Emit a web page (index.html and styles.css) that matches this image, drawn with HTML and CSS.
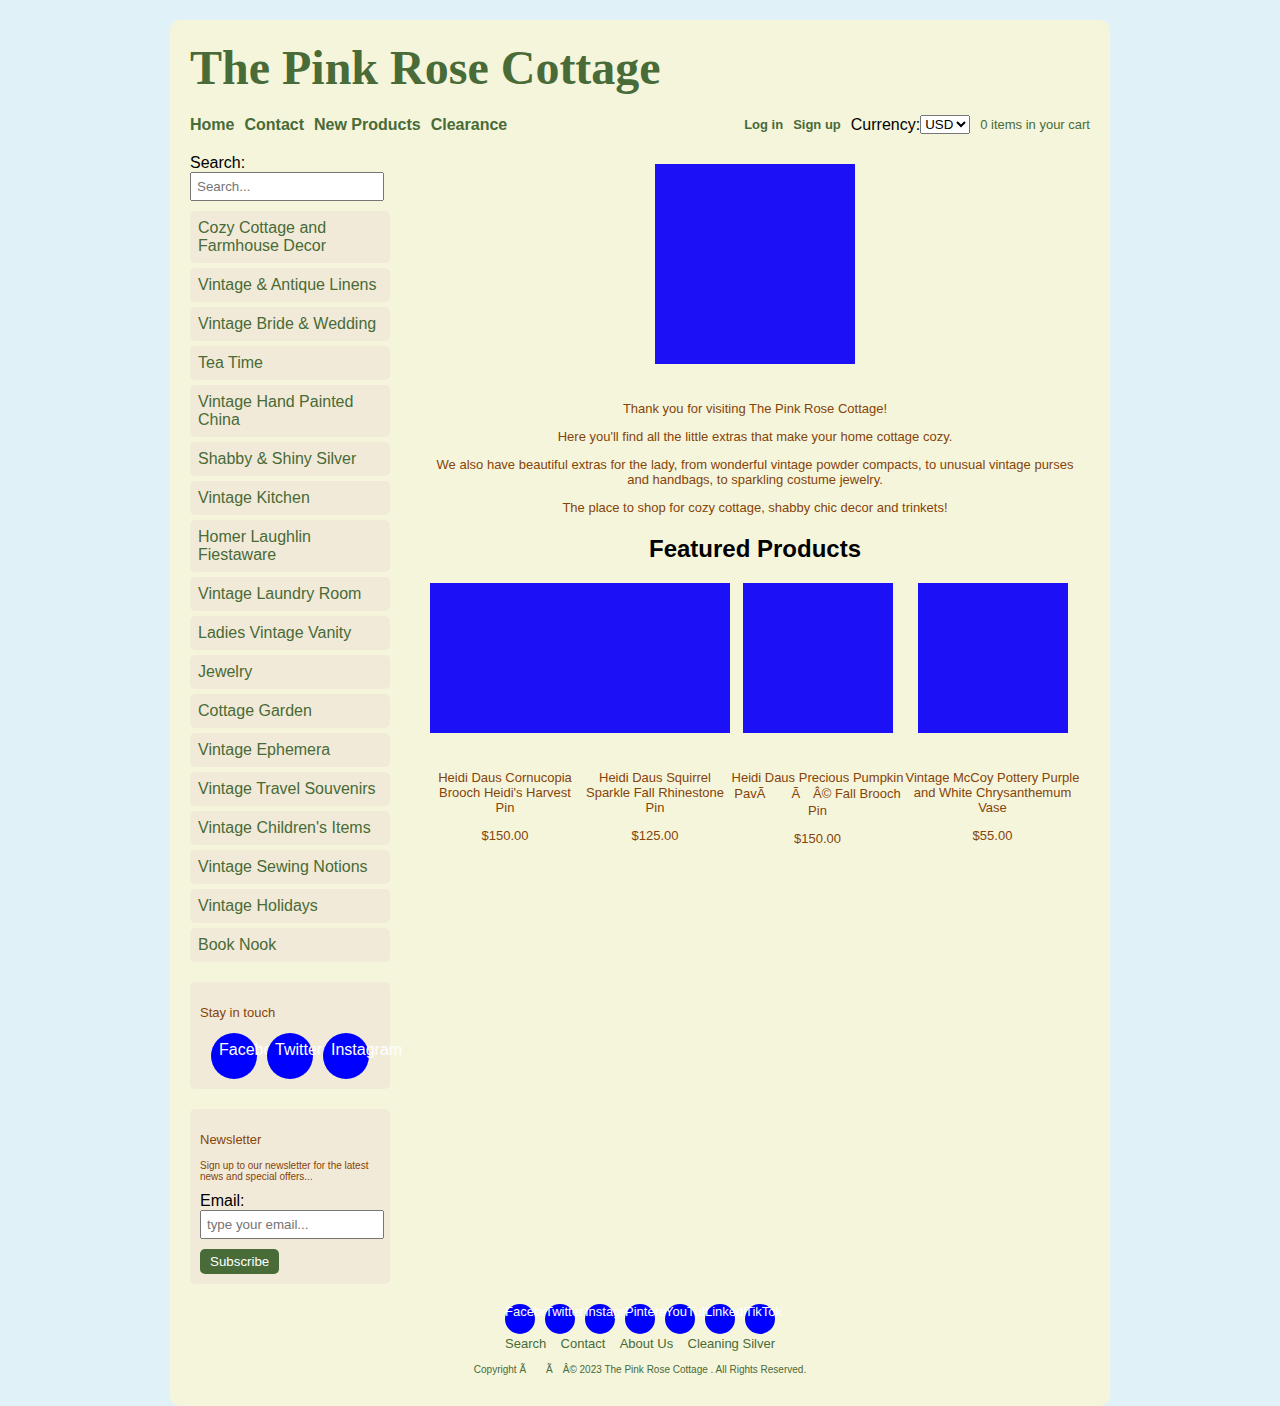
FILE: index.html
```html
<!DOCTYPE html>
<html lang="en">
<head>
<meta charset="utf-8">
<meta name="viewport" content="width=device-width, initial-scale=1">
<title>The Pink Rose Cottage</title>
<link rel="stylesheet" href="styles.css">
</head>
<body>
<div class="container">
  <header>
    <h1 class="title">The Pink Rose Cottage</h1>
    <div class="topbar">
      <nav class="nav">
        <a href="#">Home</a>
        <a href="#">Contact</a>
        <a href="#">New Products</a>
        <a href="#">Clearance</a>
      </nav>
      <div class="account">
        <a class="account-link" href="#">Log in</a>
        <a class="account-link" href="#">Sign up</a>
        <div class="currency">
          <label for="currency">Currency:</label>
          <select id="currency"><option>USD</option><option>CAD</option><option>EUR</option></select>
        </div>
        <a class="cart" href="#">0 items in your cart</a>
      </div>
    </div>
  </header>

  <div class="content">
    <aside class="sidebar">
      <form class="search">
        <label for="search">Search:</label>
        <input class="field search-field" type="text" id="search" placeholder="Search...">
      </form>
      <ul class="categories">
        <li><a href="#">Cozy Cottage and Farmhouse Decor</a></li>
        <li><a href="#">Vintage &amp; Antique Linens</a></li>
        <li><a href="#">Vintage Bride &amp; Wedding</a></li>
        <li><a href="#">Tea Time</a></li>
        <li><a href="#">Vintage Hand Painted China</a></li>
        <li><a href="#">Shabby &amp; Shiny Silver</a></li>
        <li><a href="#">Vintage Kitchen</a></li>
        <li><a href="#">Homer Laughlin Fiestaware</a></li>
        <li><a href="#">Vintage Laundry Room</a></li>
        <li><a href="#">Ladies Vintage Vanity</a></li>
        <li><a href="#">Jewelry</a></li>
        <li><a href="#">Cottage Garden</a></li>
        <li><a href="#">Vintage Ephemera</a></li>
        <li><a href="#">Vintage Travel Souvenirs</a></li>
        <li><a href="#">Vintage Children's Items</a></li>
        <li><a href="#">Vintage Sewing Notions</a></li>
        <li><a href="#">Vintage Holidays</a></li>
        <li><a href="#">Book Nook</a></li>
      </ul>
      <section class="box">
        <p>Stay in touch</p>
        <div class="social">
          <a href="#">Facebook</a>
          <a href="#">Twitter</a>
          <a href="#">Instagram</a>
        </div>
      </section>
      <section class="box">
        <p>Newsletter</p>
        <p class="small">Sign up to our newsletter for the latest news and special offers...</p>
        <form class="newsletter">
          <label for="email">Email:</label>
          <input class="field email-field" type="email" id="email" placeholder="type your email...">
          <button class="subscribe" type="button">Subscribe</button>
        </form>
      </section>
    </aside>

    <main class="main">
      <div class="hero"></div>
      <p>Thank you for visiting The Pink Rose Cottage!</p>
      <p>Here you'll find all the little extras that make your home cottage cozy.</p>
      <p>We also have beautiful extras for the lady, from wonderful vintage powder compacts, to unusual vintage purses and handbags, to sparkling costume jewelry.</p>
      <p>The place to shop for cozy cottage, shabby chic decor and trinkets!</p>
      <h2>Featured Products</h2>
      <div class="products">
        <article>
          <div class="photo"></div>
          <p>Heidi Daus Cornucopia Brooch Heidi's Harvest Pin</p>
          <p>$150.00</p>
        </article>
        <article>
          <div class="photo"></div>
          <p>Heidi Daus Squirrel Sparkle Fall Rhinestone Pin</p>
          <p>$125.00</p>
        </article>
        <article>
          <div class="photo"></div>
          <p>Heidi Daus Precious Pumpkin <span class="tall">PavÃ&emsp;&emsp;Ã&emsp;Â© Fall Brooch</span> Pin</p>
          <p>$150.00</p>
        </article>
        <article>
          <div class="photo"></div>
          <p>Vintage McCoy Pottery Purple and White Chrysanthemum Vase</p>
          <p>$55.00</p>
        </article>
      </div>
    </main>
  </div>

  <footer class="footer">
    <div class="footer-links">
      <div class="footer-social">
        <a href="#">Facebook</a>
        <a href="#">Twitter</a>
        <a href="#">Instagram</a>
        <a href="#">Pinterest</a>
        <a href="#">YouTube</a>
        <a href="#">LinkedIn</a>
        <a href="#">TikTok</a>
      </div>
      <nav class="footer-nav">
        <a href="#">Search</a>
        <a href="#">Contact</a>
        <a href="#">About Us</a>
        <a href="#">Cleaning Silver</a>
      </nav>
    </div>
    <p class="copyright">Copyright Ã&emsp;&emsp;Ã&emsp;Â© 2023 The Pink Rose Cottage . All Rights Reserved.</p>
  </footer>
</div>
</body>
</html>
```
FILE: styles.css
```css
:root {
  --sky: #e0f1f8;
  --cream: #f5f5dc;
  --linen: #f2ead8;
  --green: #486b37;
  --brown: #854408;
}

body {
  margin: 0;
  padding: 20px 20px 0;
  background: var(--sky);
  color: #000;
  font: 16px/18px "Liberation Sans", Arial, sans-serif;
}

a {
  color: var(--green);
  text-decoration: none;
}

p {
  margin: 13px 0;
  color: var(--brown);
  font-size: 13px;
  line-height: 15px;
}

.container {
  box-sizing: border-box;
  max-width: 940px;
  margin: 0 auto;
  padding: 20px;
  border-radius: 10px;
  background: var(--cream);
}

.title {
  margin: 0 0 20px;
  color: var(--green);
  font: bold 48px/55px "Liberation Serif", "Times New Roman", serif;
}

.topbar,
.nav,
.account,
.currency {
  display: flex;
  align-items: center;
}

.topbar {
  justify-content: space-between;
  margin-bottom: 20px;
}

.nav,
.account {
  gap: 10px;
}

.nav a {
  font-weight: bold;
}

.account-link,
.cart {
  font-size: 13px;
}

.account-link {
  font-weight: bold;
}

.currency select {
  width: 50px;
}

.content {
  display: flex;
  gap: 30px;
}

.sidebar {
  flex: 0 0 200px;
}

.search label,
.newsletter label {
  display: block;
}

.field {
  display: block;
  box-sizing: border-box;
  height: 29px;
  margin-bottom: 10px;
  padding: 5px;
}

.search-field {
  width: calc(100% - 6px);
}

.email-field {
  width: calc(100% + 4px);
}

.categories {
  display: grid;
  gap: 5px;
  margin: 0;
  padding: 0;
  list-style: none;
}

.categories a {
  display: block;
  padding: 8px;
  border-radius: 5px;
  background: var(--linen);
}

.box {
  display: flow-root;
  margin-top: 20px;
  padding: 10px;
  border-radius: 5px;
  background: var(--linen);
}

.small {
  margin: 0 0 10px;
  font-size: 10px;
  line-height: 11px;
}

.social,
.footer-social {
  display: flex;
  justify-content: center;
  gap: 10px;
}

.social a,
.footer-social a {
  width: 30px;
  height: 30px;
  border-radius: 50%;
  background: #00f;
  color: #fff;
}

.social a {
  padding: 8px;
}

.subscribe {
  display: block;
  padding: 5px 10px;
  border: 0;
  border-radius: 5px;
  background: var(--green);
  color: #fff;
  font-family: "Liberation Sans", Arial, sans-serif;
  line-height: 15px;
}

.main {
  flex: 1;
  min-width: 0;
  padding: 10px;
  text-align: center;
}

.hero,
.photo {
  margin: 0 auto 37px;
  background: #1c10f7;
}

.hero {
  width: 200px;
  height: 200px;
}

.photo {
  width: 150px;
  height: 150px;
}

h2 {
  margin: 20px 0;
  font-size: 24px;
  line-height: 28px;
}

.products {
  display: grid;
  grid-template-columns: 6fr 6fr 7fr 7fr;
}

.tall {
  line-height: 18px;
}

.footer {
  display: flex;
  flex-direction: column;
  align-items: center;
  margin-top: 20px;
  font-size: 13px;
  line-height: 15px;
}

.footer-nav {
  display: flex;
  justify-content: space-between;
  margin-top: 2px;
}

.copyright {
  margin: 13px 0 10px;
  color: var(--green);
  font-size: 10px;
  line-height: 12px;
}
```
